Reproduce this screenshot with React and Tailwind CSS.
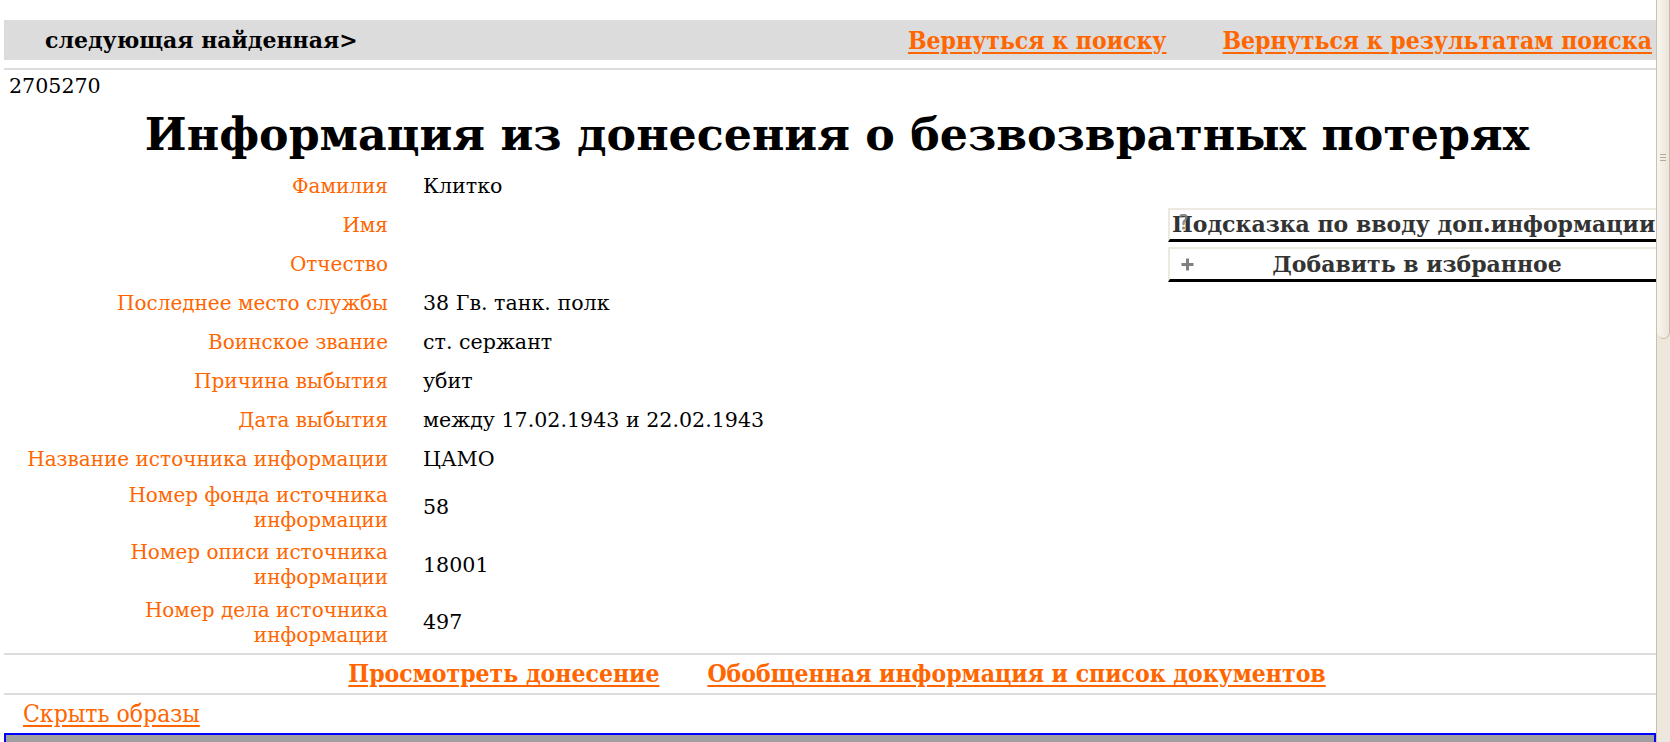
import React from 'react';

const rows = [
  { label: 'Фамилия', value: 'Клитко' },
  { label: 'Имя', value: '' },
  { label: 'Отчество', value: '' },
  { label: 'Последнее место службы', value: '38 Гв. танк. полк' },
  { label: 'Воинское звание', value: 'ст. сержант' },
  { label: 'Причина выбытия', value: 'убит' },
  { label: 'Дата выбытия', value: 'между 17.02.1943 и 22.02.1943' },
  { label: 'Название источника информации', value: 'ЦАМО' },
  { label: 'Номер фонда источника информации', value: '58', tall: true },
  { label: 'Номер описи источника информации', value: '18001', tall: true },
  { label: 'Номер дела источника информации', value: '497', tall: true },
];

const linkBold =
  "font-['DejaVu_Serif_Condensed','DejaVu_Serif',serif] font-stretch-condensed font-bold text-[24.5px] text-[#ff6600] underline underline-offset-[3px] decoration-[2px]";

const App = () => {
  return (
    <div className="flex h-[742px] w-full overflow-hidden bg-white">
      <div className="flex min-w-0 flex-1 flex-col overflow-hidden pl-[4px] pt-[20px] font-['DejaVu_Serif',serif] text-[20px] leading-[25px] text-black">
        {/* Top navigation bar */}
        <div className="flex h-[40px] shrink-0 items-center justify-between bg-[#dcdcdc] pl-[41px] pr-[4px]">
          <span className="text-[22px] font-bold">следующая найденная&gt;</span>
          <div className="flex items-center gap-[56px]">
            <a href="#" className={linkBold}>Вернуться к поиску</a>
            <a href="#" className={linkBold}>Вернуться к результатам поиска</a>
          </div>
        </div>
        <div className="mt-[8px] h-[2px] shrink-0 bg-[#dcdcdc]" />

        <div className="mt-[4px] pl-[5px] text-[20.6px]">2705270</div>

        <h1 className="mt-[9px] mb-[7px] pl-[14px] text-center text-[44.3px] font-bold leading-[52px]">
          Информация из донесения о безвозвратных потерях
        </h1>

        {/* Main info */}
        <div className="flex">
          <div className="flex w-[1164px] shrink-0 flex-col">
            {rows.map((row) => (
              <div
                key={row.label}
                className={`flex items-center ${row.tall ? 'h-[57.5px]' : 'h-[39px]'}`}
              >
                <div className="w-[384px] shrink-0 pl-[20px] text-right text-[#ff6600]">
                  {row.label}
                </div>
                <div className="pl-[35px] text-[20.6px]">{row.value}</div>
              </div>
            ))}
          </div>

          <div className="flex w-[496px] shrink-0 flex-col gap-[5px] pt-[41px] text-[22px] font-bold text-[#333333]">
            <div className="relative h-[34px] overflow-hidden whitespace-nowrap border-t-2 border-l-2 border-b-[3px] border-t-[#ece9e1] border-l-[#ece9e1] border-b-black pl-[2px] leading-[29px]">
              <svg className="absolute left-[9px] top-[4px]" width="9" height="18" viewBox="0 0 9 18">
                <path d="M1.5 2.5 Q1.5 0.8 4.5 0.8 Q7.5 0.8 7.5 3.5 Q7.5 5.5 5.5 6.8 Q4.5 7.6 4.5 10" fill="none" stroke="#7a7a7a" strokeWidth="2.4" strokeLinecap="round" opacity="0.85" />
                <circle cx="4.5" cy="14" r="1.6" fill="#7a7a7a" opacity="0.85" />
              </svg>
              Подсказка по вводу доп.информации
            </div>
            <div className="relative h-[35px] whitespace-nowrap border-t-2 border-l-2 border-b-[3px] border-t-[#ece9e1] border-l-[#ece9e1] border-b-black text-center leading-[30px]">
              <svg className="absolute left-[10px] top-[8px]" width="15" height="15" viewBox="0 0 15 15">
                <path d="M7.5 1.5 V13.5 M1.5 7.5 H13.5" stroke="#808080" strokeWidth="3" />
              </svg>
              Добавить в избранное
            </div>
          </div>
        </div>

        <div className="mt-[1px] h-[2px] shrink-0 bg-[#dcdcdc]" />
        <div className="flex h-[38px] shrink-0 items-center justify-center gap-[48px] pl-[14px]">
          <a href="#" className={linkBold}>Просмотреть донесение</a>
          <a href="#" className={linkBold}>Обобщенная информация и список документов</a>
        </div>
        <div className="h-[2px] shrink-0 bg-[#dcdcdc]" />
        <div className="flex h-[38px] shrink-0 items-center pl-[19px]">
          <a
            href="#"
            className="font-['DejaVu_Serif_Condensed','DejaVu_Serif',serif] font-stretch-condensed text-[24.5px] text-[#ff6600] underline underline-offset-[3px]"
          >
            Скрыть образы
          </a>
        </div>
        <div className="h-[40px] shrink-0 border-2 border-[#0000ff] bg-[#a0a0a0]" />
      </div>

      {/* Scrollbar */}
      <div className="flex w-[14px] shrink-0 flex-col border-l border-[#cdbfa8] bg-[#ede8de]">
        <div className="flex h-[339px] flex-col items-center rounded-b-[7px] border-b border-r border-[#c9bba3] bg-gradient-to-r from-[#f7f5f0] to-[#ebe6dc] pt-[154px]">
          <div className="flex flex-col gap-[2px]">
            <div className="h-px w-[6px] bg-[#b8ab94]" />
            <div className="h-px w-[6px] bg-[#b8ab94]" />
            <div className="h-px w-[6px] bg-[#b8ab94]" />
          </div>
        </div>
      </div>
    </div>
  );
};

export default App;
